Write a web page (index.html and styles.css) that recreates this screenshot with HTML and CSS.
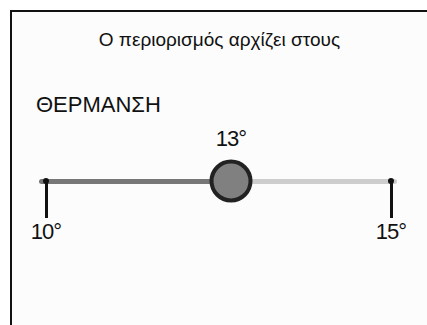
FILE: index.html
```html
<!DOCTYPE html>
<html lang="el">
<head>
<meta charset="utf-8">
<title>Θέρμανση</title>
<link rel="stylesheet" href="styles.css">
</head>
<body>
<div class="frame">
  <div class="title">Ο περιορισμός αρχίζει στους</div>
  <div class="heading">ΘΕΡΜΑΝΣΗ</div>
  <div class="slider">
    <div class="track">
      <div class="fill" style="width:53.6%"></div>
      <div class="rest"></div>
      <div class="thumb" style="left:53.6%">
        <span class="value">13°</span>
      </div>
    </div>
    <div class="ticks">
      <div class="tick"><span class="tick-line"></span><span class="tick-label">10°</span></div>
      <div class="tick"><span class="tick-line"></span><span class="tick-label">15°</span></div>
    </div>
  </div>
</div>
</body>
</html>
```

FILE: styles.css
```css
html, body {
  margin: 0;
  padding: 0;
  background: #ffffff;
  overflow: hidden;
}
body {
  font-family: "Liberation Sans", Arial, sans-serif;
  color: #111;
}
.frame {
  margin: 10px 0 0 10px;
  height: calc(100vh - 10px);
  box-sizing: border-box;
  border-top: 2px solid #111;
  border-left: 2px solid #111;
  background: #fcfcfc;
  display: flex;
  flex-direction: column;
}
.title {
  margin-top: 17px;
  font-size: 19px;
  line-height: 21px;
  text-align: center;
}
.heading {
  margin-top: 42px;
  padding-left: 24px;
  font-size: 22px;
  line-height: 26px;
}
.slider {
  margin: 61px 0 0 27px;
  width: 358px;
}
.track {
  position: relative;
  display: flex;
  height: 5px;
}
.fill {
  background: #777;
  border-radius: 3px 0 0 3px;
}
.rest {
  flex: 1;
  background: #cdcdcd;
  border-radius: 0 3px 3px 0;
}
.thumb {
  position: absolute;
  top: 50%;
  width: 43px;
  height: 43px;
  box-sizing: border-box;
  transform: translate(-50%, -50%);
  margin-top: -1px;
  border: 4px solid #222;
  border-radius: 50%;
  background: #808080;
}
.value {
  position: absolute;
  left: 50%;
  bottom: calc(100% + 13px);
  transform: translateX(-50%);
  font-size: 22px;
  line-height: 24px;
  letter-spacing: -1px;
  white-space: nowrap;
}
.ticks {
  display: flex;
  justify-content: space-between;
  margin: -3px -14px 0 -13px;
}
.tick {
  width: 40px;
  display: flex;
  flex-direction: column;
  align-items: center;
}
.tick-line {
  position: relative;
  width: 3px;
  height: 37px;
  background: #111;
}
.tick-line::before {
  content: "";
  position: absolute;
  left: 50%;
  top: -3px;
  width: 6px;
  height: 6px;
  margin-left: -3px;
  border-radius: 50%;
  background: #111;
}
.tick-label {
  margin-top: 2px;
  font-size: 22px;
  line-height: 24px;
  letter-spacing: -1px;
  white-space: nowrap;
}
```
